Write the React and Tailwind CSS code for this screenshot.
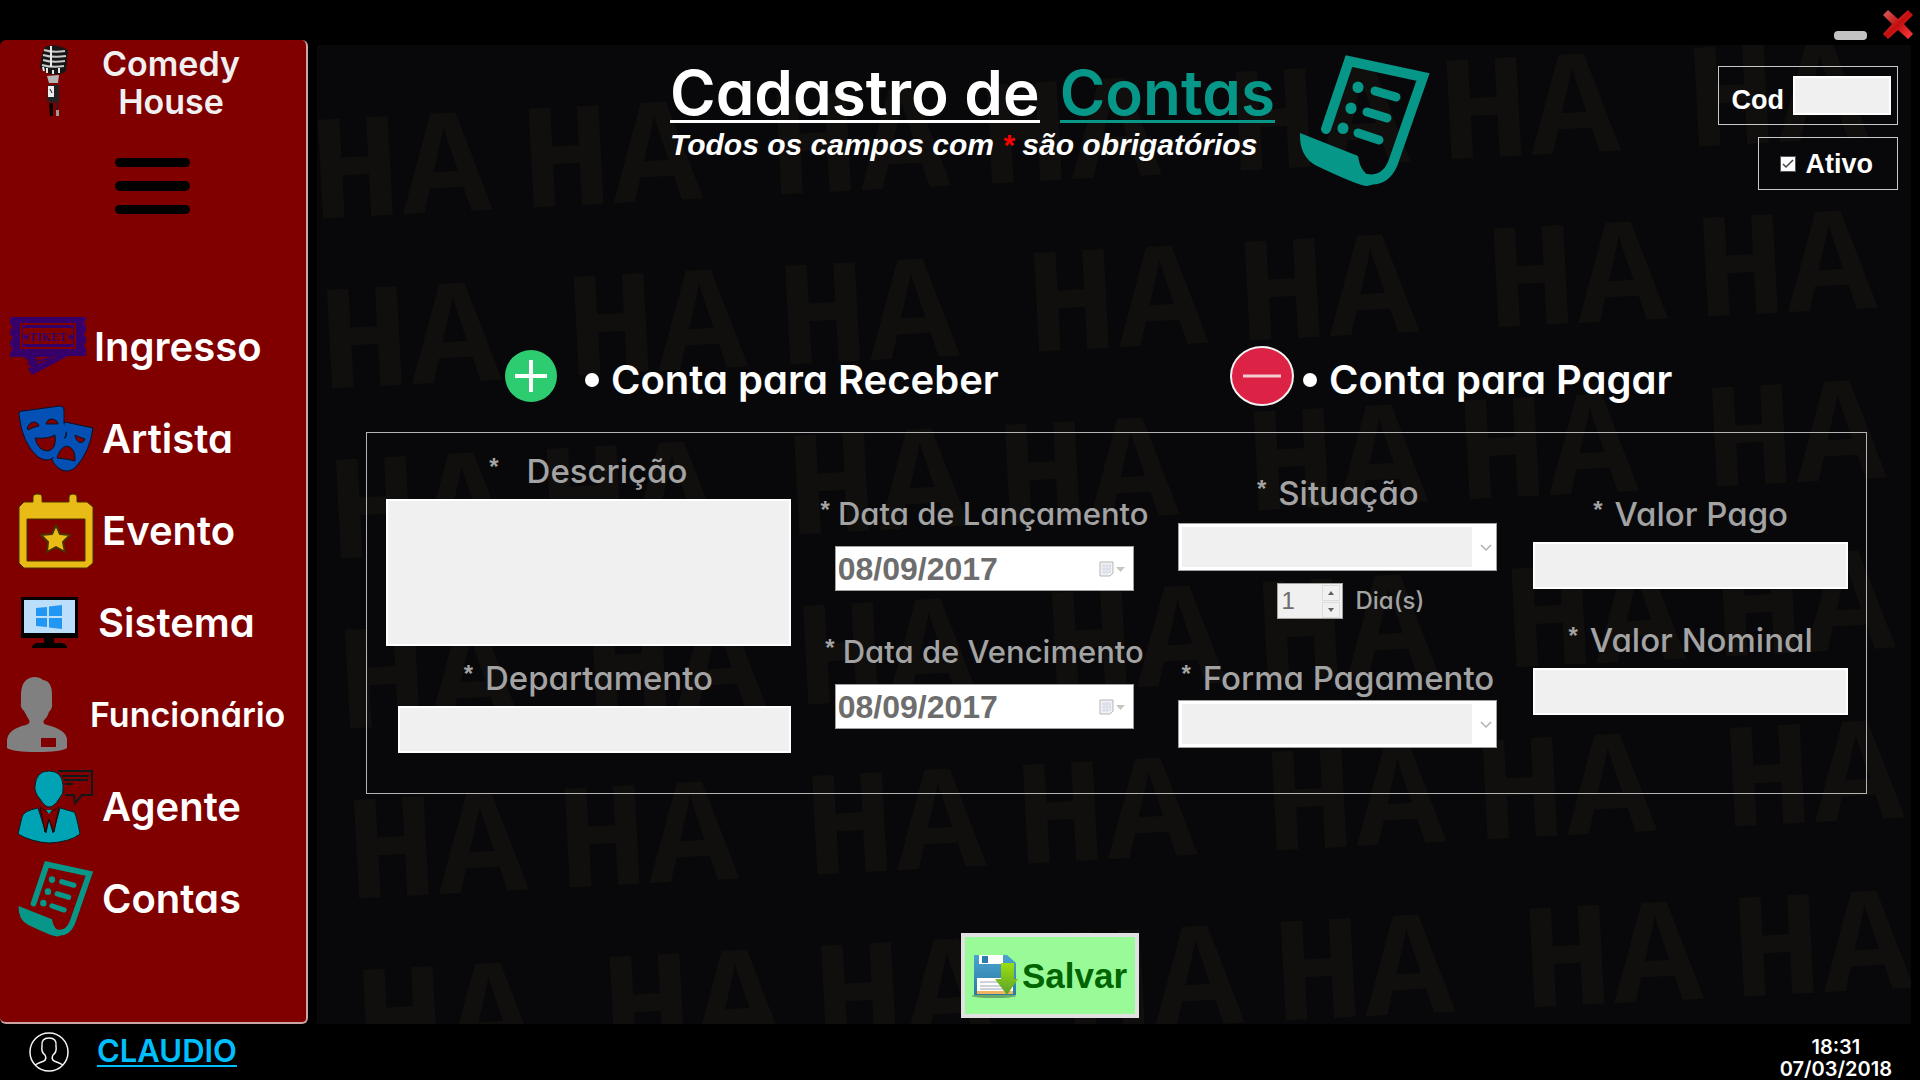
import { useId } from "react";

const rounded = "font-['Inter',sans-serif] [font-feature-settings:'cv11']";
const arial = "font-['Liberation_Sans',Arial,sans-serif]";

function BillIcon({ className }) {
  return (
    <svg viewBox="0 0 132 132" className={className} aria-hidden="true">
      <g fill="none" stroke="#069788" strokeWidth="10">
        <path d="M27 74 L50 6 L124 22 L94 108 Q86 127 68 124" strokeLinecap="round" />
        <g strokeLinecap="round" strokeWidth="9">
          <path d="M76 36 L97 42 M68 57 L88 63 M59 78 L80 85" />
          <path d="M59 32 v.5 M52 53 v.5 M44 73 v.5" strokeWidth="11" />
        </g>
      </g>
      <path d="M1 78 L59 101 Q62 121 76 122 Q78 130 68 131 Q60 131 18 111 Q0 102 1 78Z" fill="#069788" />
    </svg>
  );
}

function TicketIcon({ className }) {
  return (
    <svg viewBox="0 0 76 76" className={className} aria-hidden="true">
      <g fill="#35006a">
        <path fillRule="evenodd" d="M0 8H76V11Q72 14 76 17V22Q72 25 76 28V33Q72 36 76 39V47H58L22 66L18 60L22 57L17 56L19 53L14 48H0V43Q5 40 0 37V32Q5 29 0 26V21Q5 18 0 15ZM10 14V40H66V14ZM26 48L28 55L46 48Z" />
        <path fillRule="evenodd" d="M12 16H64V38H12ZM13 19V35H63V19Z" />
        <circle cx="16" cy="28" r="2.5" />
        <circle cx="61" cy="28" r="2.5" />
      </g>
      <text x="38" y="32" textAnchor="middle" fill="#35006a" fontFamily="Liberation Serif, serif" fontWeight="700" fontSize="12">TIKET</text>
      <path d="M28 52L42 49" stroke="#35006a" strokeWidth="2" />
    </svg>
  );
}

function MasksIcon({ className }) {
  return (
    <svg viewBox="0 0 76 76" className={className} aria-hidden="true">
      <g fill="#0450b4" stroke="#06142c" strokeWidth="1">
        <path d="M47 21 L75 27 Q72 50 58 66 Q50 73 42 68 Q34 63 32 52Z" />
        <path d="M1 14 Q0 10 5 10 L42 5 Q46 5 46 10 V21 Q46 40 36 56 Q30 62 20 56 Q4 42 1 14Z" />
      </g>
      <path d="M45 22 Q54 30 42 58 L34 55 L42 36Z" fill="#0450b4" />
      <g fill="#800000" stroke="#06142c" strokeWidth="1">
        <path d="M9 28 Q11 21 16 21 Q21 22 21 25 Q15 26 10 29Z" />
        <path d="M28 23 Q29 18 34 18 Q40 19 40 23Z" />
        <path d="M17 37 Q30 38 37 34 Q39 48 30 50 Q20 50 17 37Z" />
        <path d="M57 34 Q64 37 67 38 Q65 43 61 41 Q57 39 57 34Z" />
        <path d="M39 57 Q42 46 49 45 Q58 47 57 60 Q50 58 39 57Z" />
      </g>
      <path d="M48 31 Q49 36 46 37" stroke="#06142c" strokeWidth="1.5" fill="none" />
    </svg>
  );
}

function EventIcon({ className }) {
  return (
    <svg viewBox="0 0 76 76" className={className} aria-hidden="true">
      <g stroke="#4a3100" strokeWidth="1" fill="#e8bb17">
        <path fillRule="evenodd" d="M6 9H15V4Q15 1 19 1Q24 1 24 4V9H51V4Q51 1 55 1Q59 1 59 4V9H69L75 14V70L69 75H6L1 70V14ZM9 26V68H67V26Z" />
        <path d="M38 32L42 41L52 42L45 49L47 59L38 54L29 59L30 49L23 42L34 41Z" strokeLinejoin="round" strokeWidth="2" />
      </g>
    </svg>
  );
}

function MonitorIcon({ className }) {
  return (
    <svg viewBox="0 0 76 76" className={className} aria-hidden="true">
      <path d="M7 12H64V53H40V58H48Q53 59 53 63H18Q18 59 23 58H30V53H7Z" fill="#000" />
      <path d="M10 15H61V48H10Z" fill="#bbdefb" />
      <path d="M22 23L33 22V31H22ZM35 21.500L48 20V31H35ZM22 33H33V42L22 41ZM35 33H48V44L35 42.500Z" fill="#2196f3" />
    </svg>
  );
}

function EmployeeIcon({ className }) {
  return (
    <svg viewBox="0 0 76 76" className={className} aria-hidden="true">
      <path fillRule="evenodd" fill="#808080" d="M28 0Q34 0 37 3Q46 4 46 18V25Q47 31 43 35Q41 41 38 43Q36 47 41 48Q61 53 61 63V71Q55 75 31 75Q7 75 1 71V63Q2 52 20 48Q25 46 23 43L18 34Q14 31 15 25V16Q16 1 28 0ZM35 61V70H50V61Z" />
    </svg>
  );
}

function AgentIcon({ className }) {
  return (
    <svg viewBox="0 0 76 76" className={className} aria-hidden="true">
      <g fill="#00a3b4" stroke="#042126" strokeWidth="1">
        <path d="M31 2Q44 2 45 16V20Q46 24 41 30Q36 38 31 38Q27 38 22 30Q16 23 17 17Q18 2 31 2Z" />
        <path d="M20 39L28 64L31 50L35 64L42 39L56 43Q58 44 62 65Q52 73 31 74Q14 73 0 65L4 48Q5 42 20 39Z" />
      </g>
      <path d="M22 38L31 44L41 38L36 63L31 50L27 63Z" fill="#800000" stroke="#2a0304" />
      <path d="M28 41H34L31 45Z" fill="#00a3b4" />
      <path d="M40 2H74V26H64L57 34L56 26H47M44 7H71M46 11H70M47 15H55" fill="none" stroke="#10181a" strokeWidth="2" />
    </svg>
  );
}

function MicIcon({ className }) {
  return (
    <svg viewBox="0 0 28 72" className={className} aria-hidden="true">
      <path d="M5 2Q14-2 24 3L28 5L26 26Q20 31 10 29L0 23L2 10Z" fill="#161616" />
      <path d="M4 5Q14 8 25 6M3 10Q13 13 26 11M3 15Q13 18 25 16M2 20Q12 23 24 21" stroke="#c9c9c9" strokeWidth="2" fill="none" />
      <path d="M11 1V22M7 23V28M13 25V29M19 23V28M3 22L4 26" stroke="#e8e8e8" strokeWidth="2" fill="none" />
      <path d="M7 31L19 30L18 38L9 38Z" fill="#b4b4b4" />
      <path d="M8 40H19V55L15 58L7 56Z" fill="#222" />
      <path d="M8 41H14V52H8Z" fill="#ededed" />
      <path d="M10 44L12 48" stroke="#111" />
      <path d="M9 58H13V71H10Z" fill="#050505" />
      <path d="M18 56L17 64" stroke="#222" strokeWidth="1.500" />
      <path d="M16 65H19V71H16Z" fill="#999" />
    </svg>
  );
}

function SaveIcon({ className }) {
  return (
    <svg viewBox="0 0 46 44" className={className} aria-hidden="true">
      <defs>
        <linearGradient id="disk" x1="0" y1="0" x2="0" y2="1">
          <stop offset="0" stopColor="#4ba3cf" />
          <stop offset="1" stopColor="#2a7aa6" />
        </linearGradient>
        <linearGradient id="arrow" x1="0" y1="0" x2="0" y2="1">
          <stop offset="0" stopColor="#9be00d" />
          <stop offset="1" stopColor="#5aa02c" />
        </linearGradient>
      </defs>
      <ellipse cx="22" cy="42" rx="22" ry="2" fill="#6aa96a" />
      <path d="M2 1H35L44 9V41H2Z" fill="url(#disk)" />
      <path d="M7 1H31V10H7Z" fill="#fff" />
      <path d="M10 2H16V9H10Z" fill="#2d7db0" />
      <path d="M5 24H41V40H5Z" fill="#fff" />
      <path d="M5 37H41V40H5Z" fill="#f0b45c" />
      <path d="M8 28H38M8 32H38M8 35H38" stroke="#9ea4b4" />
      <path d="M29 9H42V25H46L35 41L23 25H29Z" fill="url(#arrow)" />
    </svg>
  );
}

function UserIcon({ className }) {
  return (
    <svg viewBox="0 0 40 40" className={className} aria-hidden="true" fill="none" stroke="#f4f4f4" strokeWidth="1.500">
      <circle cx="20" cy="20" r="19" />
      <path d="M6 33Q9 31 15 29Q18 27 16 23Q12 20 13 14Q12 6 20 6Q28 6 27 14Q28 20 24 23Q22 27 25 29Q31 31 34 33" />
    </svg>
  );
}

const menu = [
  { label: "Ingresso", Icon: TicketIcon, pad: "pl-[10px]", size: "text-[40px]" },
  { label: "Artista", Icon: MasksIcon, pad: "pl-[18px]", size: "text-[40px]" },
  { label: "Evento", Icon: EventIcon, pad: "pl-[18px]", size: "text-[40px]" },
  { label: "Sistema", Icon: MonitorIcon, pad: "pl-[14px]", size: "text-[40px]" },
  { label: "Funcionário", Icon: EmployeeIcon, pad: "pl-[6px]", size: "text-[34px]" },
  { label: "Agente", Icon: AgentIcon, pad: "pl-[18px]", size: "text-[40px]" },
  { label: "Contas", Icon: BillIcon, pad: "pl-[18px]", size: "text-[40px]" },
];

function Sidebar() {
  return (
    <aside className="flex w-[308px] shrink-0 flex-col rounded-md border-r-2 border-b-2 border-[#c9a5a5] bg-[#800000]">
      <div className="flex items-start pt-[5px] pl-10">
        <MicIcon className="h-[72px] w-7" />
        <div className="flex-1 pr-8 text-center text-[34px] leading-[38px] font-semibold text-[#f0f0f0]">
          Comedy
          <br />
          House
        </div>
      </div>
      <button aria-label="Menu" className="mt-[37px] ml-[115px] flex w-[75px] flex-col gap-[14px]">
        <span className="h-[9px] w-full rounded-full bg-black" />
        <span className="h-[10px] w-full rounded-full bg-black" />
        <span className="h-[9px] w-full rounded-full bg-black" />
      </button>
      <nav className="mt-[87px] flex flex-col">
        {menu.map(({ label, Icon, pad, size }) => (
          <a key={label} href="#" className={`flex h-[92px] items-center gap-2 ${pad}`}>
            <Icon className="size-[76px] shrink-0" />
            <span className={`${size} leading-none font-semibold text-white`}>{label}</span>
          </a>
        ))}
      </nav>
    </aside>
  );
}

const evenRow = [0, 211, 459, 670, 919, 1130, 1378];
const oddRow = [0, 247, 459, 708, 919, 1168, 1378];

function Wallpaper() {
  return (
    <svg aria-hidden="true" className="absolute inset-0 size-full" fill="#100f0d">
      {[0, 1, 2, 3, 4, 5].map((row) => (
        <g key={row} transform={`translate(${row * 9 - 4} ${row * 170 + 174}) rotate(-3)`}>
          {(row % 2 ? oddRow : evenRow).map((x) => (
            <text key={x} x={x} y="0" fontFamily="Liberation Mono, monospace" fontWeight="700" fontSize="150">
              HA
            </text>
          ))}
        </g>
      ))}
    </svg>
  );
}

function Caption({ htmlFor, size = "text-[33px]", gap = "gap-3", children }) {
  return (
    <label htmlFor={htmlFor} className={`flex justify-center ${gap} ${size} leading-10 font-medium whitespace-nowrap text-[#a3a3a3]`}>
      <span className={`${arial} text-2xl leading-8 font-bold`}>*</span>
      {children}
    </label>
  );
}

function TextField({ label }) {
  const id = useId();
  return (
    <div className="flex flex-col">
      <Caption htmlFor={id}>{label}</Caption>
      <input id={id} type="text" disabled className="mt-2 h-[47px] w-full border-2 border-white bg-[#f0f0f0]" />
    </div>
  );
}

function DateField({ label }) {
  const id = useId();
  return (
    <div className="flex flex-col">
      <Caption htmlFor={id} size="text-[31px]" gap="gap-2">{label}</Caption>
      <div className="mx-5 mt-3 flex h-[45px] items-center border border-[#a0a0a0] bg-white pr-2">
        <input id={id} type="text" disabled defaultValue="08/09/2017" className={`${arial} h-10 min-w-0 flex-1 pl-[2px] text-[32px] leading-10 font-bold text-[#6d6d6d]`} />
        <svg viewBox="0 0 26 16" className="h-4 w-[26px]" aria-hidden="true">
          <path d="M1 1H14V12L11 15H1Z" fill="#f1f2f6" stroke="#b5b5b5" />
          <path d="M3 5H12M3 8H12M3 11H12M5 3V13M8 3V13M11 3V11" stroke="#d3d6e2" />
          <path d="M17 6H26L21.500 11Z" fill="#c6c6c0" />
        </svg>
      </div>
    </div>
  );
}

function SelectField({ label, gap }) {
  const id = useId();
  return (
    <div className={`mr-3 flex flex-col ${gap}`}>
      <Caption htmlFor={id}>{label}</Caption>
      <div className="relative h-12 border border-[#a0a0a0] bg-white py-[3px] pr-6 pl-[3px]">
        <select id={id} disabled className="h-full w-full appearance-none bg-[#f0f0f0]" />
        <svg viewBox="0 0 12 8" className="absolute top-5 right-1 h-2 w-3" fill="none" stroke="#b0b0b0" strokeWidth="1.500" aria-hidden="true">
          <path d="M1 1L6 6L11 1" />
        </svg>
      </div>
    </div>
  );
}

function Options() {
  const label = "flex items-center gap-3 text-[40px] leading-10 font-semibold whitespace-nowrap text-white";
  const dot = "size-[14px] appearance-none rounded-full bg-white";
  return (
    <div className="flex pl-[187px]">
      <div className="flex w-[726px] items-center">
        <svg viewBox="0 0 54 54" className="size-[54px]" aria-hidden="true">
          <circle cx="27" cy="27" r="26" fill="#2ecc71" />
          <path d="M27 11V43M11 27H43" stroke="#fff" strokeWidth="4" />
        </svg>
        <label className={`${label} pt-2 pl-[27px]`}>
          <input type="radio" name="tipo" className={dot} />
          Conta para Receber
        </label>
      </div>
      <div className="flex items-center">
        <svg viewBox="0 0 64 60" className="h-[60px] w-16" aria-hidden="true">
          <ellipse cx="32" cy="30" rx="31" ry="29" fill="#dc2346" stroke="#f2f2f2" strokeWidth="2" />
          <path d="M13 30H51" stroke="#f4ccd3" strokeWidth="3" />
        </svg>
        <label className={`${label} pt-2 pl-[9px]`}>
          <input type="radio" name="tipo" className={dot} />
          Conta para Pagar
        </label>
      </div>
    </div>
  );
}

function AccountForm() {
  return (
    <fieldset className="mt-[26px] mr-11 ml-[49px] grid h-[362px] grid-cols-[minmax(0,405fr)_minmax(0,340fr)_minmax(0,331fr)_minmax(0,315fr)] gap-x-6 border border-[#b4b4b4] pr-[18px] pl-[19px]">
      <div className="flex flex-col pt-[18px]">
        <Caption htmlFor="descricao" gap="gap-7">Descrição</Caption>
        <textarea id="descricao" disabled className="mt-2 h-[147px] resize-none border-2 border-white bg-[#f0f0f0]" />
        <div className="mt-3 flex flex-col">
          <Caption htmlFor="departamento">Departamento</Caption>
          <input id="departamento" type="text" disabled className="mt-2 ml-3 h-[47px] border-2 border-white bg-[#f0f0f0]" />
        </div>
      </div>
      <div className="flex flex-col gap-[41px] pt-[61px]">
        <DateField label="Data de Lançamento" />
        <DateField label="Data de Vencimento" />
      </div>
      <div className="flex flex-col pt-10">
        <SelectField label="Situação" gap="gap-[10px]" />
        <div className="mt-3 flex items-center pl-[99px]">
          <div className="flex h-9 w-[66px] items-center border border-[#a0a0a0] bg-[#f0f0f0]">
            <input id="dias" type="text" disabled defaultValue="1" className={`${arial} w-11 pl-[3px] text-2xl leading-none text-[#6d6d6d]`} />
            <div className="flex flex-col gap-px">
              <button aria-label="Aumentar" className="flex h-4 w-[18px] items-center justify-center border border-[#dcdcdc]">
                <svg viewBox="0 0 6 4" className="h-1 w-[6px]" fill="#606060"><path d="M0 4L3 0L6 4Z" /></svg>
              </button>
              <button aria-label="Diminuir" className="flex h-4 w-[18px] items-center justify-center border border-[#dcdcdc]">
                <svg viewBox="0 0 6 4" className="h-1 w-[6px]" fill="#606060"><path d="M0 0L3 4L6 0Z" /></svg>
              </button>
            </div>
          </div>
          <label htmlFor="dias" className="pl-3 text-2xl leading-none font-medium text-[#a3a3a3]">Dia(s)</label>
        </div>
        <div className="mt-[39px]">
          <SelectField label="Forma Pagamento" gap="gap-[2px]" />
        </div>
      </div>
      <div className="flex flex-col gap-[31px] pt-[61px]">
        <TextField label="Valor Pago" />
        <TextField label="Valor Nominal" />
      </div>
    </fieldset>
  );
}

function Header() {
  return (
    <header className="flex h-[301px] items-start pt-[10px] pr-[13px] pl-[353px]">
      <div className="pt-[11px]">
        <h1 className="flex gap-5 text-[62px] leading-[54px] font-semibold whitespace-nowrap text-white">
          <span className="border-b-[3px] border-white">Cadastro de</span>
          <span className="border-b-[3px] border-[#069788] text-[#069788]">Contas</span>
        </h1>
        <p className={`${arial} mt-1 text-[30px] leading-9 font-bold whitespace-nowrap text-white italic`}>
          Todos os campos com <span className="text-[#ff0000]">*</span> são obrigatórios
        </p>
      </div>
      <BillIcon className="ml-6 size-[132px]" />
      <div className={`${arial} ml-auto flex flex-col items-end gap-3 pt-[11px] text-[27px] leading-8 font-bold text-white`}>
        <div className="flex h-[59px] items-center gap-[9px] border border-[#c8c8c8] pr-[6px] pl-[13px]">
          <label htmlFor="cod" className="pt-2">Cod</label>
          <input id="cod" type="text" disabled className="h-[39px] w-[98px] border-2 border-white bg-[#f0f0f0]" />
        </div>
        <label className="flex h-[53px] items-center gap-[10px] border border-[#c8c8c8] pr-6 pl-[21px]">
          <span className="relative flex size-4">
            <input type="checkbox" defaultChecked className="size-4 appearance-none border border-[#555] bg-white" />
            <svg viewBox="0 0 16 16" className="absolute inset-0 size-4" fill="none" stroke="#444" strokeWidth="1.500" aria-hidden="true">
              <path d="M3 8L6 11L13 4" />
            </svg>
          </span>
          Ativo
        </label>
      </div>
    </header>
  );
}

export default function App() {
  return (
    <div className={`${rounded} flex min-h-screen flex-col bg-black`}>
      <div className="flex h-10 items-end justify-end gap-4 pr-[7px]">
        <button aria-label="Minimizar" className="h-[9px] w-[33px] rounded-sm bg-[#c3c3c3]" />
        <button aria-label="Fechar" className="size-[30px]">
          <svg viewBox="0 0 30 30" aria-hidden="true">
            <defs>
              <linearGradient id="close" x1="0" y1="0" x2="1" y2="1">
                <stop offset="0" stopColor="#d86060" />
                <stop offset="0.5" stopColor="#c30d0d" />
                <stop offset="1" stopColor="#ff4040" />
              </linearGradient>
            </defs>
            <path d="M5 0L15 9L25 0L30 5L21 14L30 24L25 29L15 20L5 29L0 24L9 14L0 5Z" fill="url(#close)" />
          </svg>
        </button>
      </div>
      <div className="flex flex-1">
        <Sidebar />
        <main className="relative mt-[5px] mr-[9px] ml-[9px] flex flex-1 flex-col overflow-hidden bg-[#08080a]">
          <Wallpaper />
          <div className="relative flex flex-1 flex-col">
            <Header />
            <Options />
            <AccountForm />
            <button className={`${arial} mt-auto mb-[6px] ml-[644px] flex h-[85px] w-[178px] items-center gap-1 border-4 border-[#e1e1e1] bg-[#98fb98] pl-[7px] text-[35px] leading-none font-bold text-[#006400]`}>
              <SaveIcon className="h-11 w-[46px]" />
              Salvar
            </button>
          </div>
        </main>
      </div>
      <footer className="flex h-14 items-center pr-7 pl-[29px]">
        <UserIcon className="size-10" />
        <a href="#" className="ml-7 border-b-2 border-[#00bfff] text-[31px] leading-7 font-semibold text-[#00bfff]">CLAUDIO</a>
        <div className="ml-auto pt-3 text-center text-xl leading-[22px] font-semibold text-white">
          18:31
          <br />
          07/03/2018
        </div>
      </footer>
    </div>
  );
}
